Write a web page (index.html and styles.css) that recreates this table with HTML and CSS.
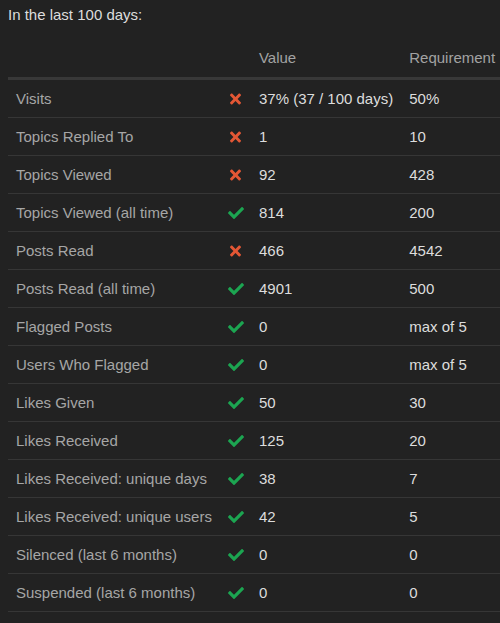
FILE: index.html
```html
<!DOCTYPE html>
<html>
<head>
<meta charset="utf-8">
<link rel="stylesheet" href="styles.css">
</head>
<body>
<div class="page">
  <div class="title">In the last 100 days:</div>
  <table class="req">
    <thead>
      <tr><th></th><th></th><th>Value</th><th>Requirement</th></tr>
    </thead>
    <tbody>
      <tr><td class="label">Visits</td><td class="icon"><svg class="no" viewBox="0 0 352 512"><path d="M242.72 256l100.07-100.07c12.28-12.28 12.28-32.19 0-44.48l-22.24-22.24c-12.28-12.28-32.19-12.28-44.48 0L176 189.28 75.930 89.21c-12.28-12.28-32.19-12.28-44.480 0L9.21 111.45c-12.28 12.28-12.28 32.19 0 44.48L109.28 256 9.21 356.07c-12.28 12.28-12.28 32.19 0 44.48l22.24 22.24c12.28 12.28 32.2 12.28 44.48 0L176 322.72l100.07 100.07c12.28 12.28 32.2 12.28 44.48 0l22.24-22.24c12.28-12.28 12.28-32.19 0-44.48L242.72 256z"/></svg></td><td>37% (37 / 100 days)</td><td>50%</td></tr>
      <tr><td class="label">Topics Replied To</td><td class="icon"><svg class="no" viewBox="0 0 352 512"><path d="M242.72 256l100.07-100.07c12.28-12.28 12.28-32.19 0-44.48l-22.24-22.24c-12.28-12.28-32.19-12.28-44.48 0L176 189.28 75.930 89.21c-12.28-12.28-32.19-12.28-44.48 0L9.21 111.45c-12.28 12.28-12.28 32.19 0 44.48L109.28 256 9.21 356.07c-12.28 12.28-12.28 32.19 0 44.48l22.24 22.24c12.28 12.28 32.2 12.28 44.48 0L176 322.72l100.07 100.07c12.28 12.28 32.2 12.28 44.48 0l22.24-22.240c12.28-12.28 12.28-32.19 0-44.48L242.72 256z"/></svg></td><td>1</td><td>10</td></tr>
      <tr><td class="label">Topics Viewed</td><td class="icon"><svg class="no" viewBox="0 0 352 512"><path d="M242.72 256l100.07-100.07c12.28-12.28 12.28-32.19 0-44.48l-22.24-22.24c-12.28-12.28-32.19-12.28-44.48 0L176 189.28 75.930 89.21c-12.28-12.28-32.19-12.28-44.48 0L9.21 111.45c-12.28 12.28-12.28 32.19 0 44.48L109.28 256 9.21 356.07c-12.28 12.28-12.28 32.19 0 44.48l22.24 22.24c12.28 12.28 32.2 12.28 44.48 0L176 322.72l100.07 100.07c12.28 12.28 32.2 12.28 44.48 0l22.24-22.24c12.28-12.28 12.28-32.19 0-44.48L242.72 256z"/></svg></td><td>92</td><td>428</td></tr>
      <tr><td class="label">Topics Viewed (all time)</td><td class="icon"><svg class="yes" viewBox="0 0 512 512"><path d="M173.898 439.404l-166.4-166.4c-9.997-9.997-9.997-26.206 0-36.204l36.203-36.204c9.997-9.998 26.207-9.998 36.204 0L192 312.69 432.095 72.596c9.997-9.997 26.207-9.997 36.204 0l36.203 36.204c9.997 9.997 9.997 26.206 0 36.204l-294.4 294.401c-9.998 9.997-26.207 9.997-36.204-.001z"/></svg></td><td>814</td><td>200</td></tr>
      <tr><td class="label">Posts Read</td><td class="icon"><svg class="no" viewBox="0 0 352 512"><path d="M242.72 256l100.07-100.07c12.28-12.28 12.28-32.19 0-44.48l-22.24-22.24c-12.28-12.28-32.19-12.28-44.48 0L176 189.28 75.930 89.21c-12.28-12.28-32.19-12.28-44.48 0L9.21 111.45c-12.28 12.28-12.28 32.19 0 44.48L109.28 256 9.21 356.07c-12.28 12.28-12.28 32.19 0 44.48l22.24 22.24c12.28 12.28 32.2 12.28 44.48 0L176 322.72l100.07 100.07c12.28 12.28 32.2 12.28 44.48 0l22.24-22.24c12.28-12.28 12.28-32.19 0-44.48L242.72 256z"/></svg></td><td>466</td><td>4542</td></tr>
      <tr><td class="label">Posts Read (all time)</td><td class="icon"><svg class="yes" viewBox="0 0 512 512"><path d="M173.898 439.404l-166.4-166.4c-9.997-9.997-9.997-26.206 0-36.204l36.203-36.204c9.997-9.998 26.207-9.998 36.204 0L192 312.69 432.095 72.596c9.997-9.997 26.207-9.997 36.204 0l36.203 36.204c9.997 9.997 9.997 26.206 0 36.204l-294.4 294.401c-9.998 9.997-26.207 9.997-36.204-.001z"/></svg></td><td>4901</td><td>500</td></tr>
      <tr><td class="label">Flagged Posts</td><td class="icon"><svg class="yes" viewBox="0 0 512 512"><path d="M173.898 439.404l-166.4-166.4c-9.997-9.997-9.997-26.206 0-36.204l36.203-36.204c9.997-9.998 26.207-9.998 36.204 0L192 312.69 432.095 72.596c9.997-9.997 26.207-9.997 36.204 0l36.203 36.204c9.997 9.997 9.997 26.206 0 36.204l-294.4 294.401c-9.998 9.997-26.207 9.997-36.204-.001z"/></svg></td><td>0</td><td>max of 5</td></tr>
      <tr><td class="label">Users Who Flagged</td><td class="icon"><svg class="yes" viewBox="0 0 512 512"><path d="M173.898 439.404l-166.4-166.4c-9.997-9.997-9.997-26.206 0-36.204l36.203-36.204c9.997-9.998 26.207-9.998 36.204 0L192 312.69 432.095 72.596c9.997-9.997 26.207-9.997 36.204 0l36.203 36.204c9.997 9.997 9.997 26.206 0 36.204l-294.4 294.401c-9.998 9.997-26.207 9.997-36.204-.001z"/></svg></td><td>0</td><td>max of 5</td></tr>
      <tr><td class="label">Likes Given</td><td class="icon"><svg class="yes" viewBox="0 0 512 512"><path d="M173.898 439.404l-166.4-166.4c-9.997-9.997-9.997-26.206 0-36.204l36.203-36.204c9.997-9.998 26.207-9.998 36.204 0L192 312.69 432.095 72.596c9.997-9.997 26.207-9.997 36.204 0l36.203 36.204c9.997 9.997 9.997 26.206 0 36.204l-294.4 294.401c-9.998 9.997-26.207 9.997-36.204-.001z"/></svg></td><td>50</td><td>30</td></tr>
      <tr><td class="label">Likes Received</td><td class="icon"><svg class="yes" viewBox="0 0 512 512"><path d="M173.898 439.404l-166.4-166.4c-9.997-9.997-9.997-26.206 0-36.204l36.203-36.204c9.997-9.998 26.207-9.998 36.204 0L192 312.69 432.095 72.596c9.997-9.997 26.207-9.997 36.204 0l36.203 36.204c9.997 9.997 9.997 26.206 0 36.204l-294.4 294.401c-9.998 9.997-26.207 9.997-36.204-.001z"/></svg></td><td>125</td><td>20</td></tr>
      <tr><td class="label">Likes Received: unique days</td><td class="icon"><svg class="yes" viewBox="0 0 512 512"><path d="M173.898 439.404l-166.4-166.4c-9.997-9.997-9.997-26.206 0-36.204l36.203-36.204c9.997-9.998 26.207-9.998 36.204 0L192 312.69 432.095 72.596c9.997-9.997 26.207-9.997 36.204 0l36.203 36.204c9.997 9.997 9.997 26.206 0 36.204l-294.4 294.401c-9.998 9.997-26.207 9.997-36.204-.001z"/></svg></td><td>38</td><td>7</td></tr>
      <tr><td class="label">Likes Received: unique users</td><td class="icon"><svg class="yes" viewBox="0 0 512 512"><path d="M173.898 439.404l-166.4-166.4c-9.997-9.997-9.997-26.206 0-36.204l36.203-36.204c9.997-9.998 26.207-9.998 36.204 0L192 312.69 432.095 72.596c9.997-9.997 26.207-9.997 36.204 0l36.203 36.204c9.997 9.997 9.997 26.206 0 36.204l-294.4 294.401c-9.998 9.997-26.207 9.997-36.204-.001z"/></svg></td><td>42</td><td>5</td></tr>
      <tr><td class="label">Silenced (last 6 months)</td><td class="icon"><svg class="yes" viewBox="0 0 512 512"><path d="M173.898 439.404l-166.4-166.4c-9.997-9.997-9.997-26.206 0-36.204l36.203-36.204c9.997-9.998 26.207-9.998 36.204 0L192 312.69 432.095 72.596c9.997-9.997 26.207-9.997 36.204 0l36.203 36.204c9.997 9.997 9.997 26.206 0 36.204l-294.4 294.401c-9.998 9.997-26.207 9.997-36.204-.001z"/></svg></td><td>0</td><td>0</td></tr>
      <tr><td class="label">Suspended (last 6 months)</td><td class="icon"><svg class="yes" viewBox="0 0 512 512"><path d="M173.898 439.404l-166.4-166.4c-9.997-9.997-9.997-26.206 0-36.204l36.203-36.204c9.997-9.998 26.207-9.998 36.204 0L192 312.69 432.095 72.596c9.997-9.997 26.207-9.997 36.204 0l36.203 36.204c9.997 9.997 9.997 26.206 0 36.204l-294.4 294.401c-9.998 9.997-26.207 9.997-36.204-.001z"/></svg></td><td>0</td><td>0</td></tr>
    </tbody>
  </table>
</div>
</body>
</html>
```

FILE: styles.css
```css
html, body {
  margin: 0;
  padding: 0;
  background: #222222;
  overflow: hidden;
}
.page {
  width: 500px;
  height: 623px;
  overflow: hidden;
  padding: 4px 0 0 8px;
  box-sizing: border-box;
  font-family: "Liberation Sans", Arial, sans-serif;
  font-size: 15px;
  line-height: 21px;
  color: #dddddd;
}
.title {
  margin: 0 0 14px 0;
}
.req {
  border-collapse: collapse;
  white-space: nowrap;
}
.req th {
  text-align: left;
  font-weight: normal;
  color: #a3a3a3;
  padding: 8px 8px 9px 8px;
  border-bottom: 3px solid #383838;
}
.req td {
  padding: 8px;
  border-bottom: 1px solid #363636;
  color: #dddddd;
}
.req td.label {
  color: #a6a6a6;
}
.req td.icon {
  width: 16px;
  padding-right: 7px;
  text-align: center;
}
.req svg {
  height: 16px;
  vertical-align: middle;
  position: relative;
  top: -1px;
}
.req svg.no {
  width: 11px;
  fill: #e45735;
}
.req svg.yes {
  width: 16px;
  fill: #1ca551;
}
```
